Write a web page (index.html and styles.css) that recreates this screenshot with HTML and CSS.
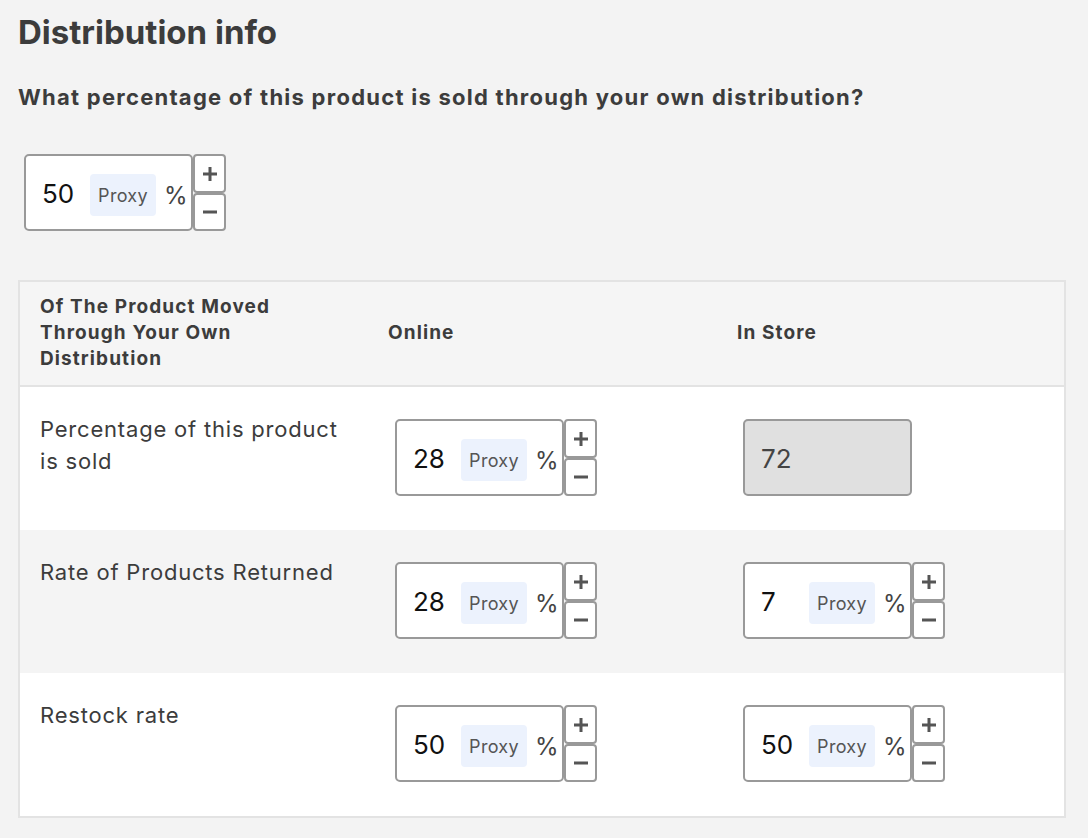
FILE: index.html
```html
<!DOCTYPE html>
<html>
<head>
<meta charset="utf-8">
<link rel="stylesheet" href="styles.css">
</head>
<body>
<h1 class="title">Distribution info</h1>
<p class="question">What percentage of this product is sold through your own distribution?</p>

<div class="field top-field">
  <div class="box"><span class="num">50</span><span class="proxy">Proxy</span><span class="pct">%</span></div>
  <div class="step">
    <div class="btn up"><svg width="14" height="14" viewBox="0 0 14 14"><rect x="0" y="5.5" width="14" height="3" fill="#555"/><rect x="5.5" y="0" width="3" height="14" fill="#555"/></svg></div>
    <div class="btn down"><svg width="14" height="14" viewBox="0 0 14 14"><rect x="0" y="5.5" width="14" height="3" fill="#555"/></svg></div>
  </div>
</div>

<div class="table">
  <div class="row head">
    <div class="hcell">Of The Product Moved Through Your Own Distribution</div>
    <div class="hcell">Online</div>
    <div class="hcell">In Store</div>
  </div>

  <div class="row white">
    <div class="label">Percentage of this product is sold</div>
    <div class="cell">
      <div class="field">
        <div class="box"><span class="num">28</span><span class="proxy">Proxy</span><span class="pct">%</span></div>
        <div class="step">
          <div class="btn up"><svg width="14" height="14" viewBox="0 0 14 14"><rect x="0" y="5.5" width="14" height="3" fill="#555"/><rect x="5.5" y="0" width="3" height="14" fill="#555"/></svg></div>
          <div class="btn down"><svg width="14" height="14" viewBox="0 0 14 14"><rect x="0" y="5.5" width="14" height="3" fill="#555"/></svg></div>
        </div>
      </div>
    </div>
    <div class="cell">
      <div class="box disabled"><span class="num">72</span></div>
    </div>
  </div>

  <div class="row gray">
    <div class="label">Rate of Products Returned</div>
    <div class="cell">
      <div class="field">
        <div class="box"><span class="num">28</span><span class="proxy">Proxy</span><span class="pct">%</span></div>
        <div class="step">
          <div class="btn up"><svg width="14" height="14" viewBox="0 0 14 14"><rect x="0" y="5.5" width="14" height="3" fill="#555"/><rect x="5.5" y="0" width="3" height="14" fill="#555"/></svg></div>
          <div class="btn down"><svg width="14" height="14" viewBox="0 0 14 14"><rect x="0" y="5.5" width="14" height="3" fill="#555"/></svg></div>
        </div>
      </div>
    </div>
    <div class="cell">
      <div class="field">
        <div class="box"><span class="num">7</span><span class="proxy">Proxy</span><span class="pct">%</span></div>
        <div class="step">
          <div class="btn up"><svg width="14" height="14" viewBox="0 0 14 14"><rect x="0" y="5.5" width="14" height="3" fill="#555"/><rect x="5.5" y="0" width="3" height="14" fill="#555"/></svg></div>
          <div class="btn down"><svg width="14" height="14" viewBox="0 0 14 14"><rect x="0" y="5.5" width="14" height="3" fill="#555"/></svg></div>
        </div>
      </div>
    </div>
  </div>

  <div class="row white">
    <div class="label">Restock rate</div>
    <div class="cell">
      <div class="field">
        <div class="box"><span class="num">50</span><span class="proxy">Proxy</span><span class="pct">%</span></div>
        <div class="step">
          <div class="btn up"><svg width="14" height="14" viewBox="0 0 14 14"><rect x="0" y="5.5" width="14" height="3" fill="#555"/><rect x="5.5" y="0" width="3" height="14" fill="#555"/></svg></div>
          <div class="btn down"><svg width="14" height="14" viewBox="0 0 14 14"><rect x="0" y="5.5" width="14" height="3" fill="#555"/></svg></div>
        </div>
      </div>
    </div>
    <div class="cell">
      <div class="field">
        <div class="box"><span class="num">50</span><span class="proxy">Proxy</span><span class="pct">%</span></div>
        <div class="step">
          <div class="btn up"><svg width="14" height="14" viewBox="0 0 14 14"><rect x="0" y="5.5" width="14" height="3" fill="#555"/><rect x="5.5" y="0" width="3" height="14" fill="#555"/></svg></div>
          <div class="btn down"><svg width="14" height="14" viewBox="0 0 14 14"><rect x="0" y="5.5" width="14" height="3" fill="#555"/></svg></div>
        </div>
      </div>
    </div>
  </div>
</div>
</body>
</html>
```

FILE: styles.css
```css
* { box-sizing: border-box; }
html, body { margin: 0; }
body {
  background: #f3f3f3;
  font-family: Inter, "Liberation Sans", sans-serif;
  color: #3c3c3c;
  padding: 12px 22px 0 18px;
  width: 1088px;
}
.title {
  margin: 0;
  font-size: 33px;
  line-height: 40px;
  font-weight: 700;
  letter-spacing: 0;
  color: #3c3c3c;
}
.question {
  margin: 32px 0 0 0;
  font-size: 22px;
  line-height: 26px;
  font-weight: 700;
  letter-spacing: 1.25px;
  color: #3c3c3c;
}
.top-field {
  margin: 44px 0 0 6px;
}
.field {
  display: flex;
  align-items: stretch;
}
.box {
  width: 169px;
  height: 77px;
  background: #fff;
  border: 2px solid #999;
  border-radius: 5px;
  display: flex;
  align-items: center;
  padding-left: 16px;
  padding-top: 2px;
}
.num {
  width: 48px;
  font-size: 26px;
  color: #111;
}
.proxy {
  width: 66px;
  height: 42px;
  background: #ecf2fd;
  border-radius: 4px;
  display: flex;
  align-items: center;
  justify-content: center;
  font-size: 18px;
  letter-spacing: 0.3px;
  color: #555;
  margin-top: 3px;
}
.pct {
  margin-left: 8px;
  font-size: 24px;
  color: #444;
  padding-top: 3px;
}
.step {
  display: flex;
  flex-direction: column;
  width: 33px;
}
.btn {
  height: 39px;
  background: #fff;
  border: 2px solid #999;
  border-radius: 4px;
  display: flex;
  align-items: center;
  justify-content: center;
}
.btn.down { height: 38px; }
.box.disabled {
  background: #e0e0e0;
}
.box.disabled .num { color: #444; }

.table {
  margin-top: 49px;
  width: 1048px;
  border: 2px solid #e3e3e3;
  background: #fff;
}
.row {
  display: grid;
  grid-template-columns: 348px 348px 348px;
}
.row.head {
  background: #f5f5f5;
  border-bottom: 2px solid #e3e3e3;
  align-items: center;
  padding: 12px 0 13px 0;
}
.hcell {
  padding: 0 20px;
  font-size: 19px;
  line-height: 26px;
  font-weight: 700;
  letter-spacing: 1.1px;
  color: #3c3c3c;
}
.hcell:first-child { padding-right: 60px; }
.hcell:last-child { padding-left: 21px; }
.row.white { background: #fff; }
.row.gray { background: #f4f4f4; }
.row.white, .row.gray {
  height: 143px;
  align-items: start;
}
.label {
  padding: 26px 20px 0 20px;
  font-size: 22px;
  line-height: 32px;
  letter-spacing: 0.8px;
  color: #3c3c3c;
}
.cell {
  padding: 32px 0 0 27px;
}
```
